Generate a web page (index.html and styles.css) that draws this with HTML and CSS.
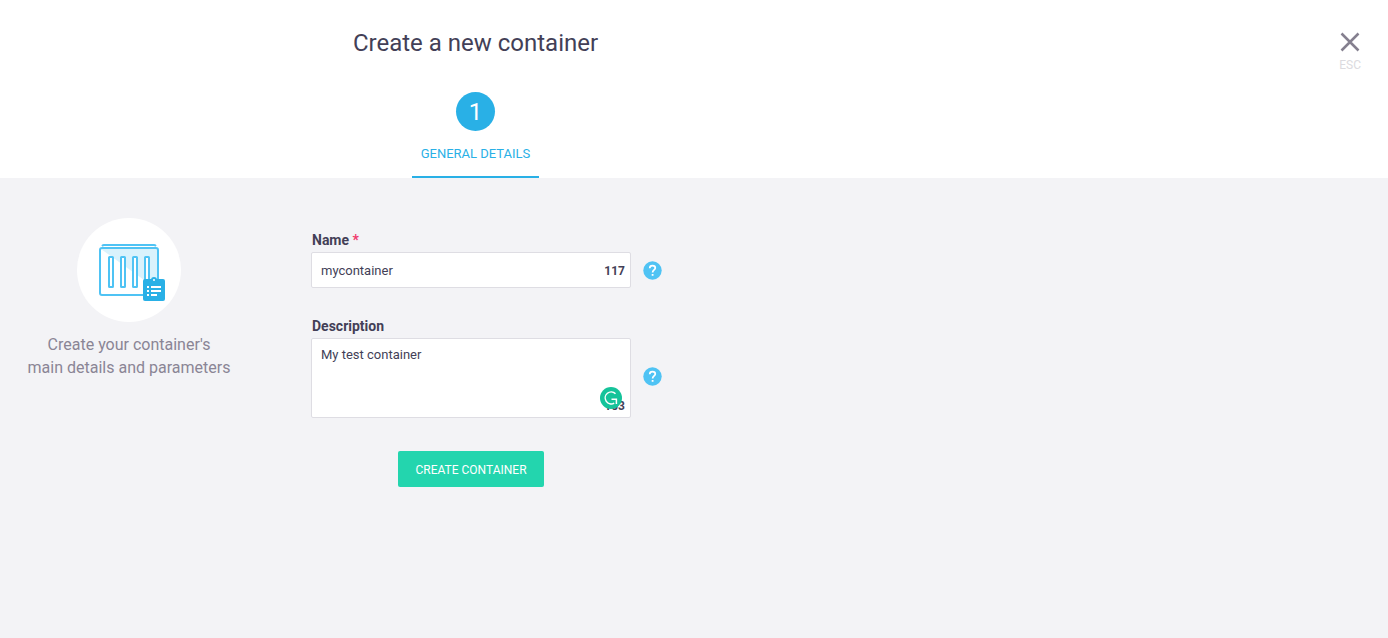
FILE: index.html
```html
<!DOCTYPE html>
<html lang="en">
<head>
<meta charset="utf-8">
<meta name="viewport" content="width=device-width, initial-scale=1">
<title>Create a new container</title>
<link rel="stylesheet" href="styles.css">
</head>
<body>
<header class="header">
  <div class="header-main">
    <h1 class="title">Create a new container</h1>
    <nav class="steps">
      <a class="step" href="#details">
        <span class="step-number">1</span>
        <span class="step-label">GENERAL DETAILS</span>
      </a>
    </nav>
  </div>
  <button class="close" type="button">
    <svg width="20" height="20" viewBox="0 0 20 20" aria-hidden="true"><path d="M1.5 1.5L18.5 18.5M18.5 1.5L1.5 18.5" fill="none" stroke="#85808f" stroke-width="2.5"/></svg>
    <span>ESC</span>
  </button>
</header>
<main class="content" id="details">
  <aside class="intro">
    <svg class="intro-icon" width="104" height="104" viewBox="0 0 104 104" aria-hidden="true">
      <circle cx="52" cy="52" r="52" fill="#fff"/>
      <path d="M24 31H81V72Z" fill="#d9f2fc"/>
      <g fill="none" stroke="#4fc3f4" stroke-width="2">
        <path d="M25 28Q26 27 27 27H77Q78 27 79 28"/>
        <rect x="23" y="30" width="58" height="47" rx="2"/>
        <g fill="#fff">
          <rect x="32" y="39" width="4" height="30" rx="0.5"/>
          <rect x="44" y="39" width="4" height="30" rx="0.5"/>
          <rect x="56" y="39" width="4" height="30" rx="0.5"/>
          <rect x="68" y="39" width="4" height="30" rx="0.5"/>
        </g>
      </g>
      <rect x="66" y="61" width="22" height="22" rx="2" fill="#29b0e6"/>
      <circle cx="77" cy="62" r="3" fill="#29b0e6"/>
      <circle cx="77" cy="62" r="1" fill="#fff"/>
      <path d="M70 68h2v2h-2zM74 68h10v2H74zM70 72h2v2h-2zM74 72h10v2H74zM70 76h2v2h-2zM74 76h6v2h-6z" fill="#fff"/>
    </svg>
    <p class="intro-text">Create your container's<br>main details and parameters</p>
  </aside>
  <form class="form">
    <div class="field">
      <label class="label" for="name">Name <span class="required">*</span></label>
      <div class="control">
        <input class="input" id="name" type="text" value="mycontainer">
        <span class="count">117</span>
      </div>
      <button class="help" type="button" aria-label="Help for name">
        <svg width="19" height="19" viewBox="0 0 19 19" aria-hidden="true"><circle cx="9.5" cy="9.5" r="9.2" fill="#4fc3f4"/><path d="M6.7 7.2C6.7 5.5 7.9 4.6 9.5 4.6S12.3 5.6 12.3 7C12.3 9 9.6 9 9.6 11.6" fill="none" stroke="#fff" stroke-width="1.7"/><path d="M8.7 13h1.8v1.8H8.7z" fill="#fff"/></svg>
      </button>
    </div>
    <div class="field">
      <label class="label" for="description">Description</label>
      <div class="control">
        <textarea class="input textarea" id="description" spellcheck="false">My test container</textarea>
        <span class="count count-bottom">103</span>
        <svg class="checker" width="22" height="22" viewBox="0 0 22 22" aria-hidden="true"><circle cx="11" cy="11" r="11" fill="#15c39a"/><path d="M15.5 6.7A6 6 0 1 0 14.2 16.1M11.5 12.3H16.4V17" fill="none" stroke="#fff" stroke-width="1.5"/></svg>
      </div>
      <button class="help help-tall" type="button" aria-label="Help for description">
        <svg width="19" height="19" viewBox="0 0 19 19" aria-hidden="true"><circle cx="9.5" cy="9.5" r="9.2" fill="#4fc3f4"/><path d="M6.7 7.2C6.7 5.5 7.9 4.6 9.5 4.6S12.3 5.6 12.3 7C12.3 9 9.6 9 9.6 11.6" fill="none" stroke="#fff" stroke-width="1.7"/><path d="M8.7 13h1.8v1.8H8.7z" fill="#fff"/></svg>
      </button>
    </div>
    <div class="actions">
      <button class="submit" type="button">CREATE CONTAINER</button>
    </div>
  </form>
</main>
</body>
</html>
```
FILE: styles.css
```css
* {
  box-sizing: border-box;
}

body {
  margin: 0;
  min-height: 100vh;
  background: #f3f3f6;
  color: #433f57;
  font: 13px/18px Roboto, "Liberation Sans", sans-serif;
}

button,
input,
textarea {
  font: inherit;
  color: inherit;
}

button {
  padding: 0;
  border: 0;
  background: none;
  cursor: pointer;
}

.header {
  display: flex;
  justify-content: space-between;
  align-items: flex-start;
  background: #fff;
}

.header-main {
  display: flex;
  flex-direction: column;
  align-items: center;
  width: 100%;
  max-width: 951px;
  padding-top: 28px;
}

.title {
  margin: 0 0 34px;
  font-size: 24px;
  font-weight: 400;
  line-height: 30px;
}

.step {
  display: flex;
  flex-direction: column;
  align-items: center;
  padding: 0 9px 13px;
  border-bottom: 2px solid #29b0e6;
  color: #29b0e6;
  text-decoration: none;
}

.step-number {
  width: 39px;
  height: 39px;
  margin-bottom: 14px;
  border-radius: 50%;
  background: #29b0e6;
  color: #fff;
  font-size: 24px;
  line-height: 40px;
  text-align: center;
}

.close {
  display: flex;
  flex-direction: column;
  align-items: center;
  gap: 4px;
  margin: 32px 27px 0 0;
  color: #dcdbe0;
  font-size: 12px;
}

.content {
  display: flex;
  align-items: flex-start;
  padding-top: 40px;
}

.intro {
  display: flex;
  flex-direction: column;
  align-items: center;
  width: 258px;
  margin-right: 53px;
}

.intro-text {
  margin: 11px 0 0;
  color: #8a8595;
  font-size: 16px;
  line-height: 23px;
  text-align: center;
}

.form {
  display: flex;
  flex-direction: column;
  gap: 28px;
  padding-top: 12px;
}

.field {
  display: grid;
  grid-template-columns: 320px auto;
  column-gap: 12px;
  row-gap: 2px;
  align-items: center;
}

.label {
  grid-column: 1 / -1;
  padding: 1px;
  font-size: 14px;
  font-weight: 700;
}

.required {
  color: #f0386b;
}

.control {
  display: flex;
  position: relative;
}

.input {
  width: 100%;
  height: 36px;
  padding: 0 40px 0 9px;
  border: 1px solid #dedde3;
  border-radius: 2px;
  outline: 0;
  background: #fff;
}

.textarea {
  height: 80px;
  padding-top: 7px;
  resize: none;
}

.count {
  position: absolute;
  top: 10px;
  right: 6px;
  font-size: 12px;
  font-weight: 700;
}

.count-bottom {
  top: auto;
  bottom: 3px;
}

.checker {
  position: absolute;
  right: 9px;
  bottom: 9px;
}

.help {
  display: flex;
}

.help-tall {
  margin-bottom: 4px;
}

.actions {
  width: 320px;
  padding-top: 5px;
  text-align: center;
}

.submit {
  height: 36px;
  padding: 1px 17px 0;
  border-radius: 2px;
  background: #23d5ae;
  color: #fff;
  font-size: 12px;
}
```
